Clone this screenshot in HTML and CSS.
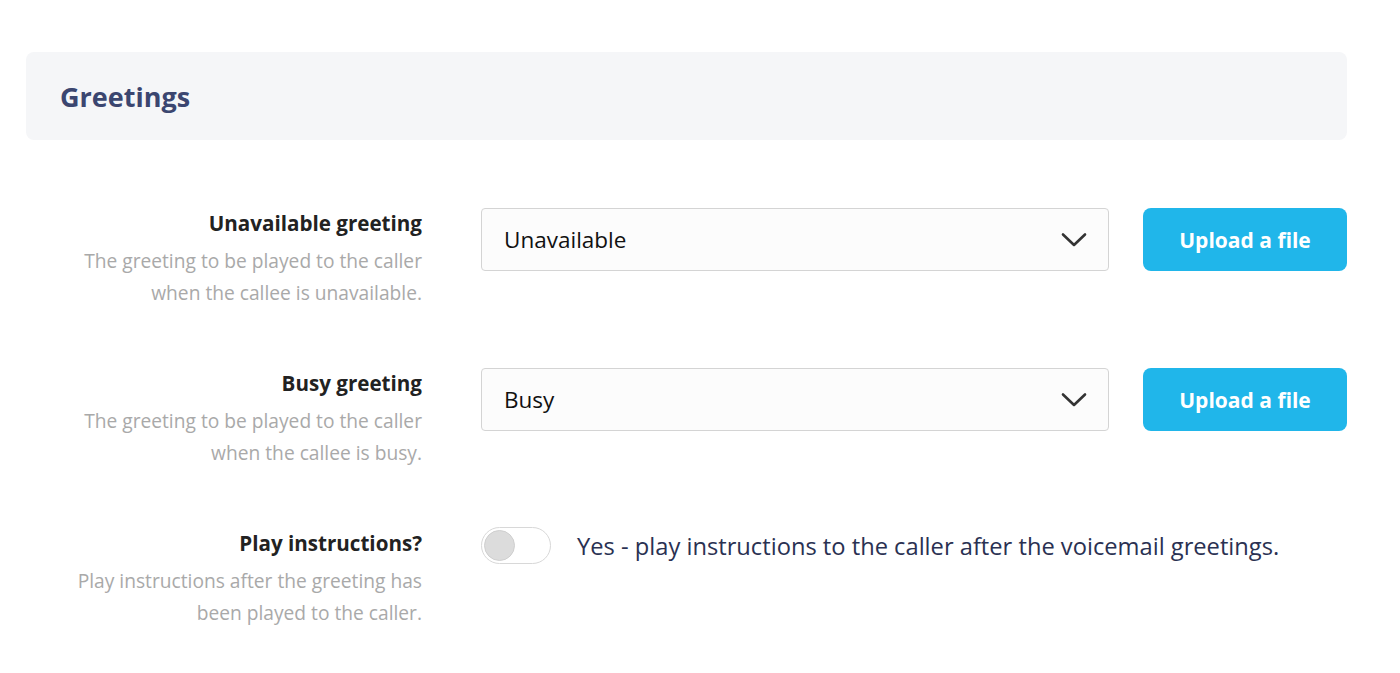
FILE: index.html
```html
<!DOCTYPE html>
<html lang="en">
<head>
    <meta charset="UTF-8">
    <meta name="viewport" content="width=device-width, initial-scale=1.0">
    <title>Greetings</title>
    <link rel="stylesheet" href="styles.css">
</head>
<body>
    <div class="page">
        <div class="panel-header">
            <h2 class="panel-header__title">Greetings</h2>
        </div>

        <div class="form">
            <div class="form__row">
                <div class="form__label">
                    <div class="form__name">Unavailable greeting</div>
                    <div class="form__help">The greeting to be played to the caller<br>when the callee is unavailable.</div>
                </div>
                <div class="select">
                    <span class="select__value">Unavailable</span>
                    <svg class="select__arrow" width="26" height="16" viewBox="0 0 26 16"><path d="M2 2.5 L13 13 L24 2.5" fill="none" stroke="#333" stroke-width="2.6" stroke-linecap="round" stroke-linejoin="round"/></svg>
                </div>
                <button class="btn-upload">Upload a file</button>
            </div>

            <div class="form__row">
                <div class="form__label">
                    <div class="form__name">Busy greeting</div>
                    <div class="form__help">The greeting to be played to the caller<br>when the callee is busy.</div>
                </div>
                <div class="select">
                    <span class="select__value">Busy</span>
                    <svg class="select__arrow" width="26" height="16" viewBox="0 0 26 16"><path d="M2 2.5 L13 13 L24 2.5" fill="none" stroke="#333" stroke-width="2.6" stroke-linecap="round" stroke-linejoin="round"/></svg>
                </div>
                <button class="btn-upload">Upload a file</button>
            </div>

            <div class="form__row">
                <div class="form__label">
                    <div class="form__name">Play instructions?</div>
                    <div class="form__help">Play instructions after the greeting has<br>been played to the caller.</div>
                </div>
                <div class="toggle-field">
                    <span class="toggle"><span class="toggle__knob"></span></span>
                    <span class="toggle-field__text">Yes - play instructions to the caller after the voicemail greetings.</span>
                </div>
            </div>
        </div>
    </div>
</body>
</html>
```

FILE: styles.css
```css
body {
    margin: 0;
    background-color: #fff;
    font-family: 'Open Sans', 'Lato', sans-serif;
}

.page {
    padding: 52px 53px 0 26px;
}

.panel-header {
    height: 88px;
    background-color: #f5f6f8;
    border-radius: 8px;
    display: flex;
    align-items: center;
    padding-left: 34px;
}

.panel-header__title {
    margin: 0;
    font-size: 27px;
    font-weight: 700;
    color: #3b4670;
}

.form {
    padding-top: 67px;
}

.form__row {
    display: grid;
    grid-template-columns: 421px 628px 204px;
    column-gap: 34px;
    align-items: start;
    margin-bottom: 58px;
}

.form__label {
    text-align: right;
    padding-right: 25px;
}

.form__name {
    font-size: 20.6px;
    line-height: 32px;
    font-weight: 700;
    color: #222;
}

.form__help {
    margin-top: 6px;
    font-size: 19.2px;
    line-height: 32px;
    color: #a9a9a9;
}

.select {
    margin-top: 1px;
    height: 63px;
    box-sizing: border-box;
    border: 1px solid #d4d4d4;
    border-radius: 4px;
    background-color: #fcfcfc;
    display: flex;
    align-items: center;
    justify-content: space-between;
    padding: 0 21px 0 22px;
}

.select__value {
    font-size: 22.5px;
    color: #111;
}

.btn-upload {
    margin-top: 1px;
    height: 63px;
    border: none;
    border-radius: 8px;
    background-color: #20b6ea;
    color: #fff;
    font-family: inherit;
    font-size: 21px;
    font-weight: 700;
    cursor: pointer;
}

.toggle-field {
    grid-column: 2 / 4;
    display: flex;
    align-items: center;
    gap: 26px;
}

.toggle {
    width: 70px;
    height: 37px;
    box-sizing: border-box;
    border: 1px solid #d8d8d8;
    border-radius: 19px;
    background-color: #fff;
    display: flex;
    align-items: center;
    padding-left: 2px;
}

.toggle__knob {
    width: 31px;
    height: 31px;
    border-radius: 50%;
    background-color: #dcdcdc;
    border: 1px solid #cfcfcf;
    box-sizing: border-box;
}

.toggle-field__text {
    font-size: 23.7px;
    color: #2a3152;
}
```
